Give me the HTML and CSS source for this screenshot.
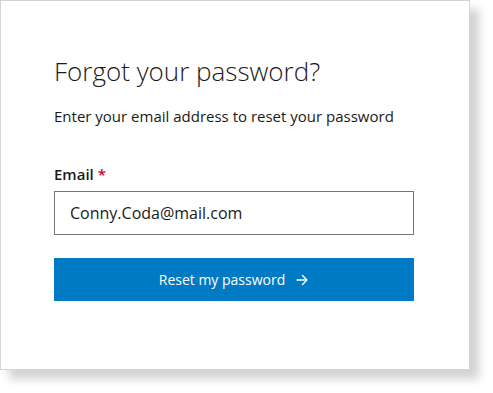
FILE: index.html
```html
<!DOCTYPE html>
<html lang="en">
<head>
    <meta charset="UTF-8">
    <meta name="viewport" content="width=device-width, initial-scale=1.0">
    <title>Forgot your password</title>
    <link rel="stylesheet" href="styles.css">
</head>
<body>

    <div class="card">
        <h1 class="title">Forgot your password?</h1>
        <p class="subtitle">Enter your email address to reset your password</p>

        <form class="reset-form" onsubmit="return false;">
            <label class="field-label" for="email">Email <span class="required">*</span></label>
            <input class="field-input" type="email" id="email" value="Conny.Coda@mail.com">

            <button class="reset-button" type="submit">
                Reset my password
                <svg class="arrow" width="14" height="14" viewBox="0 0 14 14" fill="none" stroke="currentColor" stroke-width="1.4" stroke-linecap="round" stroke-linejoin="round">
                    <path d="M2 7h10M7.5 2.5L12 7l-4.5 4.5"/>
                </svg>
            </button>
        </form>
    </div>

</body>
</html>
```

FILE: styles.css
```css
/* Colores */
:root {
    --texto: #1a1a1a;
    --borde-card: #d4d4d4;
    --borde-input: #757575;
    --azul: #007ac3;
    --rojo: #d6002a;
}

html, body {
    height: 100%;
}

body {
    margin: 0;
    background-color: #ffffff;
    font-family: "Open Sans", "Noto Sans", sans-serif;
    color: var(--texto);
}

/* Tarjeta */
.card {
    box-sizing: border-box;
    width: 470px;
    height: 370px;
    padding: 52px 55px 0 53px;
    background-color: #ffffff;
    border: 1px solid var(--borde-card);
    box-shadow: 9px 9px 9px rgba(0, 0, 0, 0.18);
}

.title {
    margin: 0;
    font-size: 26px;
    font-weight: 300;
    line-height: 36px;
}

.subtitle {
    margin: 16px 0 0;
    font-size: 15px;
    line-height: 22px;
}

/* Formulario */
.reset-form {
    display: flex;
    flex-direction: column;
    margin-top: 36px;
}

.field-label {
    font-size: 15px;
    font-weight: 600;
    line-height: 22px;
}

.required {
    color: var(--rojo);
}

.field-input {
    box-sizing: border-box;
    width: 360px;
    height: 44px;
    margin-top: 6px;
    padding: 0 15px;
    border: 1px solid var(--borde-input);
    border-radius: 0;
    font-family: inherit;
    font-size: 16px;
    color: var(--texto);
    outline: none;
}

.reset-button {
    display: flex;
    align-items: center;
    justify-content: center;
    gap: 10px;
    width: 360px;
    height: 43px;
    margin-top: 23px;
    border: none;
    background-color: var(--azul);
    color: #ffffff;
    font-family: inherit;
    font-size: 14px;
    font-weight: 500;
    cursor: pointer;
}

.arrow {
    display: block;
}
```
